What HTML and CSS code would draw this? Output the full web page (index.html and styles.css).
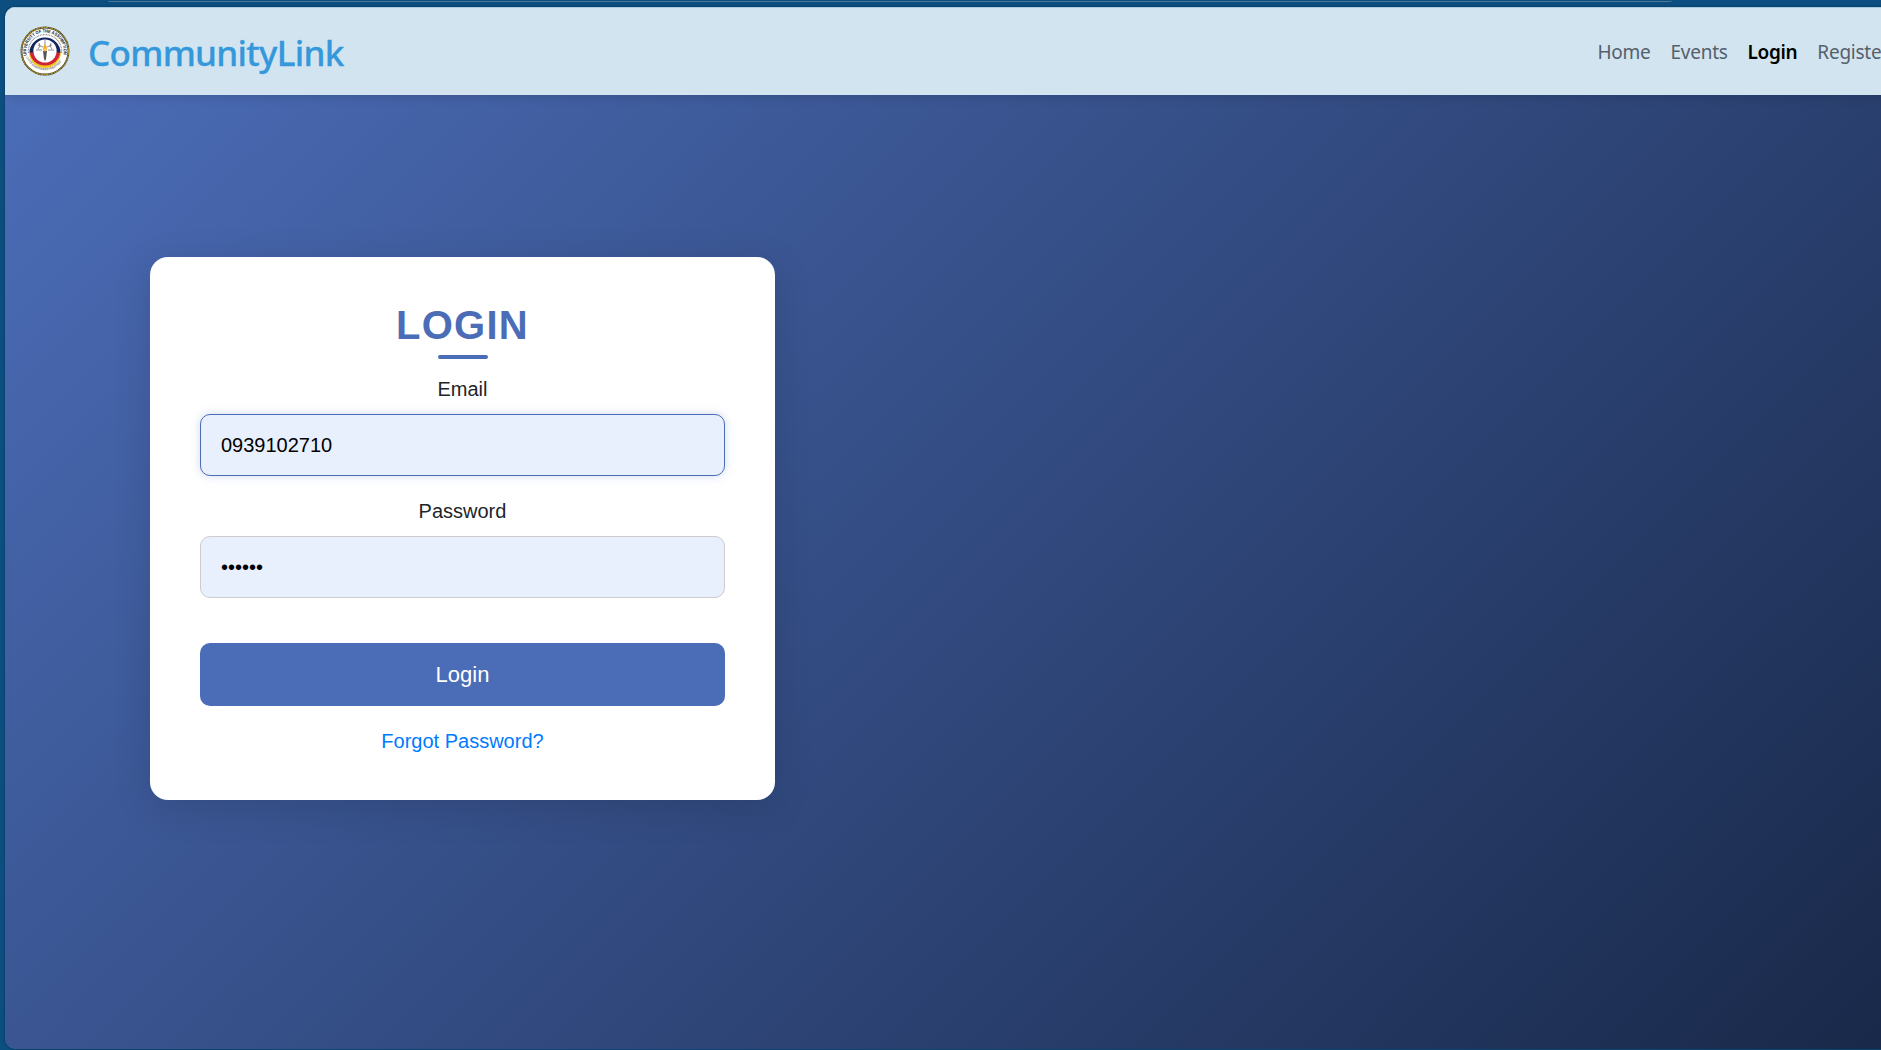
FILE: index.html
```html
<!DOCTYPE html>
<html lang="en">
<head>
<meta charset="utf-8">
<title>CommunityLink - Login</title>
<link rel="stylesheet" href="styles.css">
</head>
<body>
<div class="toolbar"></div>
<div class="page">
  <header class="navbar">
    <a class="brand" href="#">
      <svg class="seal" viewBox="0 0 50 50" aria-hidden="true">
        <defs>
          <path id="arc-top" d="M6.8 29.5A18.7 18.7 0 1 1 43.2 29.5"/>
          <path id="arc-bottom" d="M6 31A20.2 20.2 0 0 0 44 31"/>
        </defs>
        <circle cx="25" cy="25" r="24.5" fill="#4a4530"/>
        <circle cx="25" cy="25" r="23.6" fill="none" stroke="#d0b02b" stroke-width="1" stroke-dasharray="1.8 .8"/>
        <circle cx="25" cy="25" r="22.6" fill="#fff"/>
        <text class="seal-top"><textPath href="#arc-top" textLength="66" lengthAdjust="spacingAndGlyphs">UNIVERSITY OF THE ASSUMPTION</textPath></text>
        <path d="M8.5 27A16.6 16.6 0 1 1 41.5 27" fill="none" stroke="#8a8a8a" stroke-width="1.3" stroke-dasharray=".9 .7"/>
        <path d="M9.5 33A17.4 17.4 0 0 0 40.5 33" fill="none" stroke="#aaa" stroke-width="1" stroke-dasharray="1.1 .8"/>
        <text class="seal-bottom"><textPath href="#arc-bottom" textLength="44">CITY OF SAN FERNANDO PHILIPPINES</textPath></text>
        <path d="M9 26A16 16 0 0 0 41 26Z" fill="#f2c51d"/>
        <path d="M10 26A15 13.4 0 0 0 40 26Z" fill="#cf2436"/>
        <path d="M9.5 26.6A15.5 15 0 0 1 40.5 26.6Z" fill="#15265f"/>
        <circle cx="25" cy="25" r="11.6" fill="#fff"/>
        <path d="M25 14V19M18 19L23 21M32 19L27 21M16 24H22M34 24H28M19 17L20 20L18 23M31 17L30 20L32 23" fill="none" stroke="#727272" stroke-width=".8"/>
        <path d="M23 25H27L26 33L25 35L24 33Z" fill="#555"/>
        <path d="M25 18C27.5 21 27.5 25.5 25 25.5S22.5 21 25 18Z" fill="#f5a623"/>
        <circle cx="25" cy="23.5" r="1.1" fill="#ffe36b"/>
      </svg>
      <span class="brand-name">CommunityLink</span>
    </a>
    <nav class="links">
      <a href="#">Home</a>
      <a href="#">Events</a>
      <a class="active" href="#">Login</a>
      <a href="#">Register</a>
    </nav>
  </header>
  <main class="hero">
    <form class="card">
      <h1 class="title">LOGIN</h1>
      <label class="label" for="email">Email</label>
      <input class="field focused" id="email" type="text" value="0939102710">
      <label class="label" for="password">Password</label>
      <input class="field" id="password" type="password" value="secret">
      <button class="submit" type="button">Login</button>
      <a class="forgot" href="#">Forgot Password?</a>
    </form>
  </main>
</div>
</body>
</html>
```
FILE: styles.css
```css
* { box-sizing: border-box; }

body {
  margin: 0;
  height: 1050px;
  overflow: hidden;
  background: #0c4e80;
  font-family: "Liberation Sans", Arial, sans-serif;
  font-size: 20px;
  color: #212529;
}

.toolbar {
  height: 2px;
  width: 1564px;
  margin: 0 0 5px 108px;
  border-bottom: 1px solid #4c7896;
  border-radius: 0 0 6px 6px;
}

.page {
  width: 1907px;
  height: 1042px;
  margin-left: 5px;
  border-radius: 10px;
  overflow: hidden;
  display: flex;
  flex-direction: column;
  box-shadow: 0 0 3px rgba(0, 0, 0, .35);
}

.navbar {
  height: 88px;
  flex: none;
  display: flex;
  align-items: center;
  justify-content: space-between;
  padding: 0 23px 1px 15px;
  background: #d3e4f1;
  border-top: 1px solid #a9cbe2;
  box-shadow: 0 2px 10px rgba(0, 0, 0, .12);
  z-index: 1;
  font-family: "Noto Sans", sans-serif;
}

.brand {
  display: flex;
  align-items: center;
  gap: 18px;
  color: #3498db;
  text-decoration: none;
}

.brand-name {
  font-size: 35px;
  font-weight: 500;
  -webkit-text-stroke: .3px #3498db;
  line-height: 50px;
  letter-spacing: -.7px;
  padding-top: 4px;
}

.seal { width: 50px; height: 50px; margin-top: -1px; }
.seal text { font-family: "Liberation Sans", sans-serif; fill: #111; }
.seal .seal-top { font-size: 4.6px; font-weight: 700; }
.seal .seal-bottom { font-size: 2.8px; fill: #555; }

.links { display: flex; gap: 20px; }

.links a {
  color: #54606a;
  font-size: 19px;
  letter-spacing: -.25px;
  text-decoration: none;
  line-height: 30px;
  padding-top: 1px;
  white-space: nowrap;
}

.links .active { color: #000; font-weight: 600; letter-spacing: -.35px; }

.hero {
  flex: 1;
  padding: 162px 145px;
  background: linear-gradient(135deg, #4b6cb7, #182848);
}

.card {
  width: 625px;
  height: 543px;
  padding: 44px 50px;
  border-radius: 18px;
  background: #fff;
  box-shadow: 0 8px 38px rgba(0, 0, 0, .13);
  display: flex;
  flex-direction: column;
  text-align: center;
}

.title {
  margin: 0 0 15px;
  font-size: 40px;
  line-height: 48px;
  letter-spacing: 1.25px;
  color: #4b6cb7;
}

.title::after {
  content: "";
  display: block;
  width: 50px;
  height: 4px;
  margin: 6px auto 0;
  border-radius: 2px;
  background: #4b6cb7;
}

.label { line-height: 30px; margin-bottom: 10px; }

.field {
  height: 62px;
  margin: 0 0 20px;
  padding: 0 20px;
  border: 1px solid #ccc;
  border-radius: 10px;
  outline: none;
  background: #e8f0fe;
  color: #000;
  font: 20px "Liberation Sans", Arial, sans-serif;
}

.focused {
  border-color: #4b6cb7;
  box-shadow: 0 0 10px rgba(75, 108, 183, .25);
}

.submit {
  height: 63px;
  margin: 25px 0 20px;
  border: 0;
  border-radius: 10px;
  background: #4b6cb7;
  color: #fff;
  font: 22px "Liberation Sans", Arial, sans-serif;
}

.forgot { color: #007bff; line-height: 30px; text-decoration: none; }
```
